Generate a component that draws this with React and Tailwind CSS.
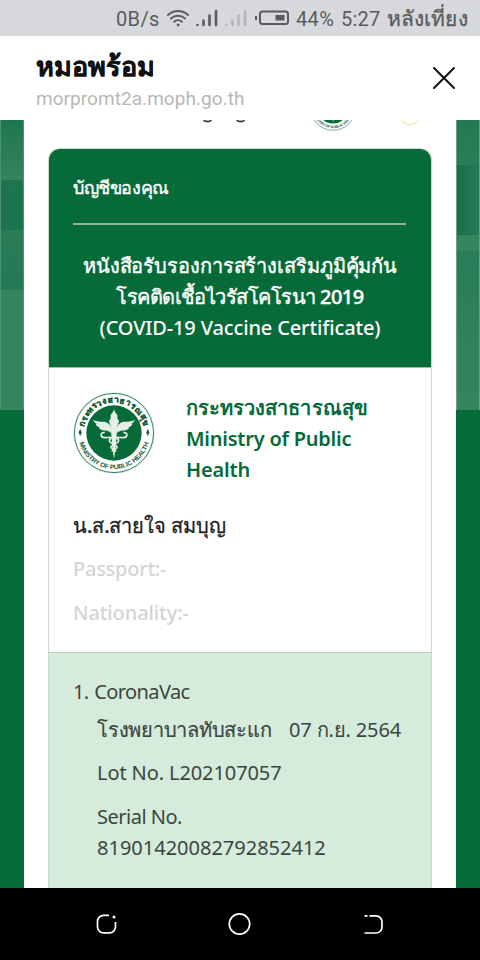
import React from "react";

function Seal({ className, id, topText = true }) {
  return (
    <svg viewBox="0 0 80 80" className={className}>
      <defs>
        <path id={`${id}-top`} d="M10.200 40a29.800 29.800 0 0 1 59.600 0" />
        <path id={`${id}-bottom`} d="M4.800 40a35.200 35.200 0 0 0 70.400 0" />
      </defs>
      <circle cx="40" cy="40" r="40" fill="#e9eeeb" />
      <circle cx="40" cy="40" r="38.600" fill="#fff" stroke="#1d7a4b" strokeWidth="0.900" />
      <circle cx="40" cy="40" r="27" fill="#066a39" />
      {topText && (
        <text fill="#1c5c3b" stroke="#1c5c3b" strokeWidth="0.350" fontSize="8" fontWeight="700" textAnchor="middle" fontFamily="'Noto Sans', sans-serif">
          <textPath href={`#${id}-top`} startOffset="50%" textLength="82">กระทรวงสาธารณสุข</textPath>
        </text>
      )}
      <text fill="#1c5c3b" fontSize="6.400" fontWeight="700" textAnchor="middle" fontFamily="'Liberation Sans', sans-serif">
        <textPath href={`#${id}-bottom`} startOffset="50%" textLength="91">MINISTRY OF PUBLIC HEALTH</textPath>
      </text>
      <path d="M7 36l1.600 3.500L7 43l-1.600-3.500zM73 36l1.600 3.500L73 43l-1.600-3.500z" fill="#1c5c3b" />
      <g fill="#e6f0e8">
        <path d="M40 17l1.300 3 2 2.500v3l1.700 3-1.700 4.500-.8 10-1.200 14L40 65l-1.300-8-1.200-14-.8-10-1.700-4.500 1.700-3v-3l2-2.500z" />
        <path d="M37 34c-2-4-5-5-8-5-3.500 0-7-.5-9.500-2 1 2.400 2.500 3.600 4 4.200l-1.500.2c1 2 2.800 2.900 4.300 3.100l-1 .7c1.200 1.800 3.100 2.300 5 2.300 2.500 0 5 .5 6.700 2.500z" />
        <path d="M43 34c2-4 5-5 8-5 3.500 0 7-.5 9.500-2-1 2.400-2.500 3.600-4 4.200l1.500.2c-1 2-2.800 2.900-4.300 3.100l1 .7c-1.200 1.800-3.100 2.300-5 2.300-2.500 0-5 .5-6.700 2.500z" />
      </g>
      <path d="M31 39.500c-5-.5-4.500 5 0 5 5 0 13.500-1.500 13.500 3 0 3-7.500 3.500-7.500 6.500 0 2 5 2 5 4M49 39.500c5-.5 4.500 5 0 5-5 0-13.500-1.500-13.500 3 0 3 7.500 3.500 7.500 6.500 0 2-5 2-5 4" fill="none" stroke="#e6f0e8" strokeWidth="1.600" />
    </svg>
  );
}

function Signal({ className }) {
  return (
    <svg viewBox="0 0 22 18" className={className} stroke="currentColor" strokeWidth="2.600" strokeLinecap="round">
      <path d="M1.500 16v0M7.500 11.500V16M13.500 6.500V16M20 2v14" />
    </svg>
  );
}

function StatusBar() {
  return (
    <div className="flex h-9 shrink-0 items-center bg-[#d7d8dc] pl-[116px] font-['Roboto','Noto_Sans',sans-serif] text-[20px] leading-9 whitespace-nowrap text-[#5a5b5d]">
      <span className="w-[51px] pt-0.5 tracking-[0.35px]">0B/s</span>
      <svg viewBox="0 0 22 18" className="h-[18px] w-[22px]" fill="none" stroke="currentColor" strokeWidth="2" strokeLinecap="round">
        <path d="M1 6a14.500 14.500 0 0 1 20 0M4 9.500a10.300 10.300 0 0 1 14 0M7.200 12.800a5.600 5.600 0 0 1 7.600 0" />
        <circle cx="11" cy="16" r="1" fill="currentColor" strokeWidth="1" />
      </svg>
      <Signal className="ml-[7px] h-[18px] w-[22px]" />
      <Signal className="ml-[7px] h-[18px] w-[22px] text-[#b5b6b9]" />
      <svg viewBox="0 0 34 16" className="ml-[8px] h-4 w-[34px]" fill="none" stroke="currentColor" strokeWidth="2">
        <rect x="5" y="1.500" width="28" height="12.500" rx="2.500" />
        <path d="M1 6v4" />
        <rect x="20.500" y="5" width="9" height="5.500" fill="currentColor" stroke="none" />
      </svg>
      <span className="ml-[7px] w-[45px] pt-0.5 tracking-[0.35px]">44%</span>
      <span className="w-[46px] pt-0.5 tracking-[0.2px]">5:27</span>
      <span className="pt-0.5 text-[21px] tracking-[0.1px] [-webkit-text-stroke:0.3px_currentColor]">หลังเที่ยง</span>
    </div>
  );
}

function TitleBar() {
  return (
    <header className="flex h-[84px] shrink-0 items-start justify-between bg-white pr-6 pl-9">
      <div className="pt-[14px] font-['Roboto','Noto_Sans',sans-serif] whitespace-nowrap">
        <h1 className="h-[34px] text-[27px] leading-[34px] font-bold text-[#111] [-webkit-text-stroke:0.3px_currentColor]">หมอพร้อม</h1>
        <p className="text-[19px] leading-[29px] tracking-[0.05px] text-[#b7b7b7]">morpromt2a.moph.go.th</p>
      </div>
      <svg viewBox="0 0 24 24" className="mt-[30px] h-6 w-6" stroke="#111" strokeWidth="2" strokeLinecap="round">
        <path d="M2 2l20 20M22 2L2 22" />
      </svg>
    </header>
  );
}

function Backdrop({ flip }) {
  return (
    <div className="flex w-6 shrink-0 flex-col bg-[#066a39]">
      {flip ? (
        <div className="flex h-[290px] flex-col border-x border-[#6b9f85]">
          <div className="h-[45px] bg-linear-to-b from-[#237852] to-[#2c7e5a]" />
          <div className="h-[70px] bg-linear-to-r from-[#1b6f4a] to-[#27795a]" />
          <div className="h-4 bg-[#36855f]" />
          <div className="grow bg-linear-to-b from-[#2a7d5a] to-[#34845f]" />
        </div>
      ) : (
        <div className="flex h-[290px] flex-col border-x border-[#4c9170]">
          <div className="h-[60px] bg-linear-to-b from-[#1c7550] to-[#36855f]" />
          <div className="h-[50px] bg-linear-to-b from-[#1e7550] to-[#1c7450]" />
          <div className="h-[60px] bg-linear-to-b from-[#2b7d59] to-[#237856]" />
          <div className="grow bg-linear-to-b from-[#34845f] to-[#36855f]" />
        </div>
      )}
    </div>
  );
}

export default function App() {
  return (
    <div className="flex h-[960px] w-[480px] flex-col overflow-hidden bg-white">
      <StatusBar />
      <TitleBar />
      <div className="flex h-[768px] shrink-0 overflow-hidden">
        <Backdrop />
        <main className="flex w-[432px] flex-col bg-white px-6 font-['Noto_Sans',sans-serif]">
          <div className="flex h-7 shrink-0 items-start overflow-hidden">
            <svg viewBox="0 0 44 4" className="ml-[154px] h-1 w-11 shrink-0" fill="none" stroke="#444" strokeWidth="1.800">
              <path d="M2 0c0 2 7 2 7 0M35 0c0 2 7 2 7 0" />
            </svg>
            <Seal id="top-seal" topText={false} className="-mt-[35px] ml-[64px] h-[46px] w-[46px] shrink-0" />
            <span className="-mt-[17px] ml-[43px] h-[22px] w-[22px] shrink-0 rounded-full border-[1.5px] border-[#f6e08a]" />
          </div>
          <section className="flex w-[384px] grow flex-col overflow-hidden rounded-t-xl border border-b-0 border-[#cfd8d3]">
            <div className="h-[219px] shrink-0 border-b border-[#9fbfae] bg-[#066a39] px-6 text-white">
              <h2 className="h-[76px] pt-[22px] text-[18px] leading-8 font-medium tracking-[-0.4px] whitespace-nowrap [-webkit-text-stroke:0.4px_currentColor]">บัญชีของคุณ</h2>
              <div className="-mt-0.5 h-0.5 w-[333px] bg-[#8fb3a0]" />
              <div className="pt-[25px] text-center text-[20px] leading-[31px] font-medium whitespace-nowrap">
                <p className="tracking-[-0.1px] [-webkit-text-stroke:0.4px_currentColor]">หนังสือรับรองการสร้างเสริมภูมิคุ้มกัน</p>
                <p className="tracking-[-0.55px] [-webkit-text-stroke:0.4px_currentColor]">โรคติดเชื้อไวรัสโคโรนา 2019</p>
                <p className="tracking-[-0.14px]">(COVID-19 Vaccine Certificate)</p>
              </div>
            </div>
            <div className="flex h-[285px] shrink-0 flex-col px-6 pt-6">
              <div className="flex h-[117px]">
                <Seal id="ministry-seal" className="h-[82px] w-[82px] shrink-0" />
                <div className="ml-[31px] text-[20px] leading-[31px] font-semibold whitespace-nowrap text-[#066a39]">
                  <p className="tracking-[0.05px]">กระทรวงสาธารณสุข</p>
                  <p className="tracking-[-0.23px]">Ministry of Public</p>
                  <p className="tracking-[-0.15px]">Health</p>
                </div>
              </div>
              <p className="h-[43px] text-[20px] leading-[34px] font-medium tracking-[-0.1px] whitespace-nowrap text-[#222] [-webkit-text-stroke:0.3px_currentColor]">น.ส.สายใจ สมบุญ</p>
              <p className="h-[44px] text-[20px] leading-[34px] font-medium tracking-[-0.25px] text-[#d3d5d4]">Passport:-</p>
              <p className="text-[20px] leading-[34px] font-medium tracking-[-0.1px] text-[#d3d5d4]">Nationality:-</p>
            </div>
            <div className="-mt-px grow border-t border-[#b7d8c3] bg-[#d5ebdb] px-6 pt-[23px] text-[20px] whitespace-nowrap text-[#3c4640]">
              <p className="h-[38px] leading-[31px] tracking-[-0.6px] [word-spacing:1px]">1. CoronaVac</p>
              <div className="pl-6">
                <div className="flex h-[43px] leading-[31px]">
                  <span className="w-[192px] tracking-[-0.25px] [-webkit-text-stroke:0.2px_currentColor]">โรงพยาบาลทับสะแก</span>
                  <span className="tracking-[-0.15px]">07 ก.ย. 2564</span>
                </div>
                <p className="h-[44px] leading-[31px] tracking-[-0.1px]">Lot No. L202107057</p>
                <p className="leading-[31px] tracking-[-0.5px]">Serial No.</p>
                <p className="leading-[31px]">81901420082792852412</p>
              </div>
            </div>
          </section>
        </main>
        <Backdrop flip />
      </div>
      <nav className="flex h-[72px] shrink-0 items-center bg-black pl-[95px] text-white">
        <svg viewBox="0 0 22 22" className="h-[22px] w-[22px]" fill="none" stroke="currentColor" strokeWidth="1.700">
          <path d="M14 2.300H8.500a6 6 0 0 0-6 6v5.500a6 6 0 0 0 6 6h6a6 6 0 0 0 6-6V9" />
          <circle cx="19" cy="4" r="1.500" fill="currentColor" stroke="none" />
        </svg>
        <svg viewBox="0 0 24 24" className="ml-[111px] h-6 w-6" fill="none" stroke="currentColor" strokeWidth="1.700">
          <circle cx="11.500" cy="12" r="10.200" />
        </svg>
        <svg viewBox="0 0 22 22" className="ml-[111px] h-[22px] w-[22px]" fill="none" stroke="currentColor" strokeWidth="1.700">
          <path d="M6.500 2.800H13a6 6 0 0 1 6 6V14a6 6 0 0 1-6 6H1.500M1.500 2.800h3" />
        </svg>
      </nav>
    </div>
  );
}
